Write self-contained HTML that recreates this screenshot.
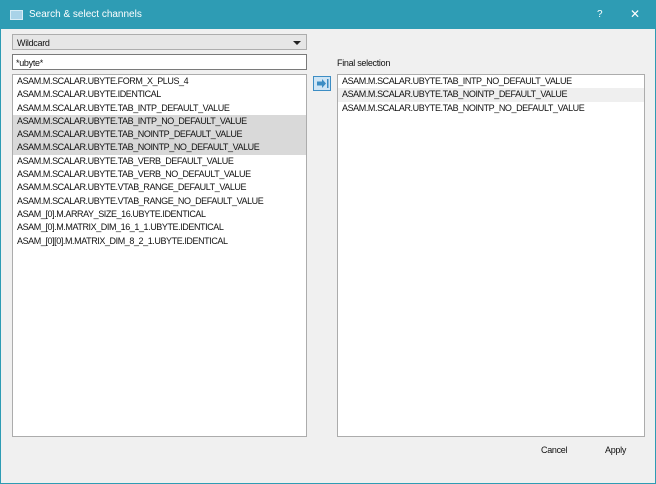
<!DOCTYPE html>
<html><head><style>
*{margin:0;padding:0;box-sizing:border-box}
body{width:656px;height:484px;background:#fff;font-family:"Liberation Sans",sans-serif;font-size:9px;color:#111;position:relative;overflow:hidden}
.win{position:absolute;left:0;top:0;width:656px;height:484px;border:1px solid #2e9cb4;background:#f0f0f0}
.title{position:absolute;left:0;top:0;width:656px;height:28px;background:#2e9cb4;color:#fff;font-size:10px}
.title .ic{position:absolute;left:9px;top:9px;width:13px;height:10px;background:#a9d3e8;border:1px solid #d8edf6}
.title .t{position:absolute;left:28px;top:8px}
.title .q{position:absolute;left:596px;top:8px;font-size:10px}
.title .x{position:absolute;left:629px;top:6px;font-size:12px}
.box{position:absolute;background:#fff;border:1px solid #acacac}
.combo{left:11px;top:33px;width:295px;height:16px;background:#e6e6e6;border-color:#adadad;padding:3px 4px;letter-spacing:-.3px}
.combo .arr{position:absolute;right:5px;top:6px;width:0;height:0;border-left:4px solid transparent;border-right:4px solid transparent;border-top:4px solid #222}
.inp{left:11px;top:53px;width:295px;height:16px;padding:3px 3px;border-color:#7a7a7a;letter-spacing:-.3px}
.list{padding-top:0}
.row{height:13.3px;line-height:13.3px;padding-left:4px;letter-spacing:-.42px;white-space:nowrap}
.sel{background:#d9d9d9}
.hov{background:#efefef}
.btnarr{position:absolute;left:312px;top:75px;width:18px;height:15px;border:1px solid #3c8dc4;background:#cfe5f5}
.lbl{position:absolute;left:336px;top:57px;letter-spacing:-.3px}
.btn{position:absolute;top:444px;font-size:9px;letter-spacing:-.3px}
</style></head><body>
<div class="win">
<div class="title"><div class="ic"></div><div class="t">Search &amp; select channels</div><div class="q">?</div><div class="x">✕</div></div>
<div class="box combo">Wildcard<div class="arr"></div></div>
<div class="box inp">*ubyte*</div>
<div class="box list" style="left:11px;top:73px;width:295px;height:363px">
<div class="row">ASAM.M.SCALAR.UBYTE.FORM_X_PLUS_4</div>
<div class="row">ASAM.M.SCALAR.UBYTE.IDENTICAL</div>
<div class="row">ASAM.M.SCALAR.UBYTE.TAB_INTP_DEFAULT_VALUE</div>
<div class="row sel">ASAM.M.SCALAR.UBYTE.TAB_INTP_NO_DEFAULT_VALUE</div>
<div class="row sel">ASAM.M.SCALAR.UBYTE.TAB_NOINTP_DEFAULT_VALUE</div>
<div class="row sel">ASAM.M.SCALAR.UBYTE.TAB_NOINTP_NO_DEFAULT_VALUE</div>
<div class="row">ASAM.M.SCALAR.UBYTE.TAB_VERB_DEFAULT_VALUE</div>
<div class="row">ASAM.M.SCALAR.UBYTE.TAB_VERB_NO_DEFAULT_VALUE</div>
<div class="row">ASAM.M.SCALAR.UBYTE.VTAB_RANGE_DEFAULT_VALUE</div>
<div class="row">ASAM.M.SCALAR.UBYTE.VTAB_RANGE_NO_DEFAULT_VALUE</div>
<div class="row">ASAM_[0].M.ARRAY_SIZE_16.UBYTE.IDENTICAL</div>
<div class="row">ASAM_[0].M.MATRIX_DIM_16_1_1.UBYTE.IDENTICAL</div>
<div class="row">ASAM_[0][0].M.MATRIX_DIM_8_2_1.UBYTE.IDENTICAL</div>
</div>
<div class="btnarr"><svg width="16" height="13" viewBox="0 0 16 13"><path d="M3 4.5h5V2l4 4.5-4 4.5V8.5H3z" fill="#3c8dc4"/><rect x="13" y="2" width="1.5" height="9" fill="#3c8dc4"/></svg></div>
<div class="lbl">Final selection</div>
<div class="box list" style="left:336px;top:73px;width:308px;height:363px">
<div class="row">ASAM.M.SCALAR.UBYTE.TAB_INTP_NO_DEFAULT_VALUE</div>
<div class="row hov">ASAM.M.SCALAR.UBYTE.TAB_NOINTP_DEFAULT_VALUE</div>
<div class="row">ASAM.M.SCALAR.UBYTE.TAB_NOINTP_NO_DEFAULT_VALUE</div>
</div>
<div class="btn" style="left:540px">Cancel</div>
<div class="btn" style="left:604px">Apply</div>
</div>
</body></html>
